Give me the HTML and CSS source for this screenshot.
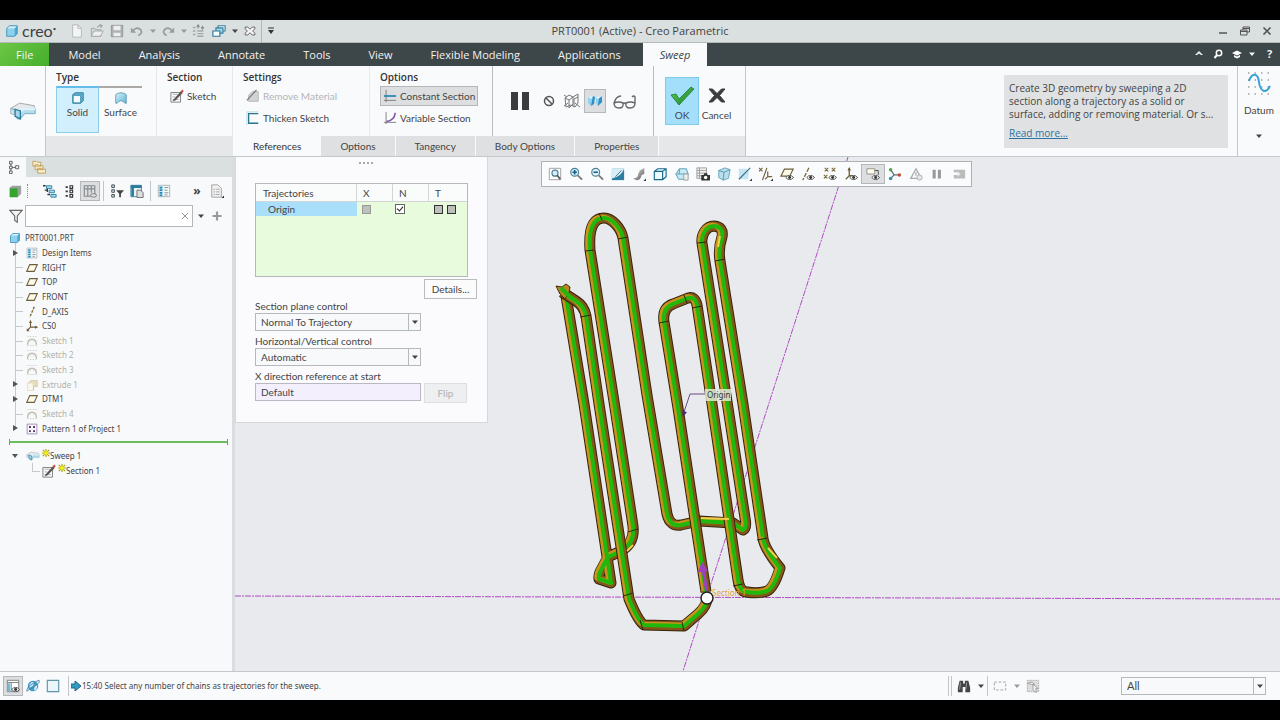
FILE: index.html
```html
<!DOCTYPE html>
<html lang="en">
<head>
<meta charset="utf-8">
<title>PRT0001 (Active) - Creo Parametric</title>
<link rel="stylesheet" href="styles.css">
</head>
<body>
<svg class="defs" aria-hidden="true">
  <defs>
    <linearGradient id="gBlue" x1="0" y1="0" x2="1" y2="1"><stop offset="0" stop-color="#d9f1fa"/><stop offset="1" stop-color="#5fb4d8"/></linearGradient>
    <linearGradient id="gGrey" x1="0" y1="0" x2="1" y2="1"><stop offset="0" stop-color="#eee"/><stop offset="1" stop-color="#555"/></linearGradient>
    <linearGradient id="gTick" x1="0" y1="0" x2="1" y2="1"><stop offset="0" stop-color="#5fd04e"/><stop offset="1" stop-color="#157a35"/></linearGradient>
    <symbol id="caret" viewBox="0 0 8 8"><path d="M1 2.500h6L4 6z" fill="currentColor"/></symbol>
    <symbol id="cube" viewBox="0 0 16 16"><path d="M2 5l3-3h9v9l-3 3H2z" fill="#4fa9d2"/><path d="M2 5h9v9H2z" fill="#8fd0ec"/><path d="M2 5l3-3h9l-3 3z" fill="#d5eff9"/><path d="M2 5l3-3h9v9l-3 3H2z" fill="none" stroke="#3c93bd"/></symbol>
    <symbol id="plane" viewBox="0 0 16 16"><path d="M5 3.500h10L11 12.500H1z" fill="#fdfbe8" stroke="#6e5f3c" stroke-width="1.500"/></symbol>
    <symbol id="axis" viewBox="0 0 16 16"><path d="M11 1L5 15" stroke="#7b6c3c" stroke-width="1.800" stroke-dasharray="3.500 1.500" fill="none"/></symbol>
    <symbol id="csys" viewBox="0 0 16 16"><path d="M6 1v8.500h9M6 9.500L1.500 14" fill="none" stroke="#6e5f3c" stroke-width="1.500"/><path d="M4 4l2-4 2 4zM12 7.500l4 2-4 2zM1 11v4h4z" fill="#6e5f3c"/></symbol>
    <symbol id="arc" viewBox="0 0 16 16"><path d="M2 13C3 3 13 3 14 13" fill="none" stroke="#b9b9aa" stroke-width="1.800"/><path d="M2 2h12M2 14h12M2 8h12" stroke="#cbc8bd" stroke-width="1.500" stroke-dasharray="1.500 2"/></symbol>
    <symbol id="listing" viewBox="0 0 16 16"><path d="M1.500 1.500h13v13h-13z" fill="#f4f9fb" stroke="#a5adb0"/><path d="M2 2h5v12H2z" fill="#c7e7f4"/><path d="M3 4h3M3 7h3M3 10h3M3 13h3" stroke="#2489b5" stroke-width="2"/><path d="M8.500 4H13M8.500 7H12M8.500 10H13M8.500 12.500H12" stroke="#7f898d"/></symbol>
    <symbol id="pencil" viewBox="0 0 16 16"><path d="M1 4h11v11H1z" fill="#fafafa" stroke="#777"/><path d="M3 6h6M3 9h3M3 12h7" stroke="#aaa"/><path d="M4 12L12.500 2.500l2 2L6 13l-3 1z" fill="#5b5350"/><path d="M12 3l2-2.500 1.800 1.800-2 2.200z" fill="#cf4c37"/></symbol>
    <symbol id="sweep" viewBox="0 0 32 22"><path d="M2 8L12 2l17 3v4l-9 2-4 1-3 5-11-3z" fill="#e7e9ea" stroke="#9aa2a5"/><path d="M2 8l10 3 4-3h14v6H18l-5 6-4 0" fill="#b3dcec" stroke="#6fa9c2"/><path d="M10 11l6-4h14v3H17l-6 5z" fill="#ddf2fa"/><path d="M7 9l6 2v9l-6-3z" fill="#a5d6ea" stroke="#2d7899" stroke-width="1.500"/></symbol>
    <symbol id="spark" viewBox="0 0 10 10"><path d="M5 0v10M0 5h10M1 1l8 8M9 1L1 9" stroke="#a9a41a" stroke-width="1.500"/><circle cx="5" cy="5" r="2.600" fill="#f4ee18"/></symbol>
    <symbol id="eye" viewBox="0 0 10 6"><path d="M.5 3Q5-2 9.500 3 5 8 .5 3z" fill="#fff" stroke="#444"/><circle cx="5" cy="3" r="1.700" fill="#333"/></symbol>
  </defs>
</svg>

<div class="app">
  <header class="titlebar">
    <div class="quick">
      <svg class="i14" viewBox="0 0 16 16"><use href="#cube"/></svg>
      <span class="brand">creo<sup>•</sup></span>
      <button aria-label="New"><svg class="i14" viewBox="0 0 16 16"><path d="M3 1h6l4 4v10H3z" fill="#f3f4f4" stroke="#b0b5b6"/><path d="M9 1v4h4" fill="none" stroke="#b0b5b6"/></svg></button>
      <button aria-label="Open"><svg class="i14" viewBox="0 0 16 16"><path d="M1.500 14V5h4l1 1.500h6V14z" fill="#d4d7d7" stroke="#a0a5a6"/><path d="M1.500 14l3-6H15l-3 6z" fill="#eee" stroke="#a0a5a6"/><path d="M8 4q2-3 5-2M11 .5l3 1.500-2 2.500" fill="none" stroke="#888"/></svg></button>
      <button aria-label="Save"><svg class="i14" viewBox="0 0 16 16"><path d="M1.500 1.500h13v13h-13z" fill="#aeb2b3" stroke="#8d9293"/><path d="M4 2h8v5H4zM4 10h8v4H4z" fill="#eee"/></svg></button>
      <button aria-label="Undo"><svg class="i14" viewBox="0 0 16 16"><path d="M3 8Q8 2 12.500 7q2 4-3 6" fill="none" stroke="#979c9d" stroke-width="2"/><path d="M1 4v6h6z" fill="#979c9d"/></svg></button>
      <button class="mini faded" aria-label="Undo list"><svg class="i8"><use href="#caret"/></svg></button>
      <button aria-label="Redo"><svg class="i14" viewBox="0 0 16 16"><path d="M13 8Q8 2 3.500 7q-2 4 3 6" fill="none" stroke="#979c9d" stroke-width="2"/><path d="M15 4v6H9z" fill="#979c9d"/></svg></button>
      <button class="mini faded" aria-label="Redo list"><svg class="i8"><use href="#caret"/></svg></button>
      <button aria-label="Regenerate"><svg class="i14" viewBox="0 0 16 16"><path d="M1 4h3M1 8h3M1 12h3M6 8h7M6 11h7M6 14h7" stroke="#a4a8a9" stroke-width="1.500"/><path d="M7 5V2M5.500 3.500L7 1l1.500 2.500M12 2v3M10.500 3.500L12 6l1.500-2.500" fill="none" stroke="#8a8f90" stroke-width="1.300"/></svg></button>
      <button aria-label="Windows"><svg class="i14" viewBox="0 0 16 16"><path d="M7 2h8v6H7z" fill="#f0f8fb" stroke="#37809f" stroke-width="1.300"/><path d="M4.500 4.500h8v6h-8z" fill="#9fd6ea" stroke="#37809f" stroke-width="1.300"/><path d="M1 8h8v6H1z" fill="#f6fbfd" stroke="#2c7898" stroke-width="1.300"/></svg></button>
      <button class="mini" aria-label="Window list"><svg class="i8"><use href="#caret"/></svg></button>
      <button aria-label="Close window"><svg class="i14" viewBox="0 0 16 16"><path d="M2.500 3.500h3L8 6l2.500-2.500h3v2L11 8l2.500 2.500v2h-3L8 10l-2.500 2.500h-3v-2L5 8 2.500 5.500z" fill="#f4f4f4" stroke="#555"/></svg></button>
      <button class="mini custom" aria-label="Customize"><svg class="i8" viewBox="0 0 8 8"><path d="M1 1h6" stroke="#333"/><path d="M1 3h6L4 7z" fill="#333"/></svg></button>
    </div>
    <h1>PRT0001 (Active) - Creo Parametric</h1>
    <div class="wincontrols">
      <button aria-label="Minimize"><svg class="i10" viewBox="0 0 10 10"><path d="M1 7h8" stroke="#555" stroke-width="1.500"/></svg></button>
      <button aria-label="Restore"><svg class="i10" viewBox="0 0 10 10"><path d="M3 4V1h6.500v5H7M3 2.500h6M.5 4H7v5H.5zM.5 5.500H7" fill="none" stroke="#555"/></svg></button>
      <button aria-label="Close"><svg class="i10" viewBox="0 0 10 10"><path d="M1.500 1.500l7 7M8.500 1.500l-7 7" stroke="#555" stroke-width="1.700"/></svg></button>
    </div>
  </header>

  <nav class="maintabs">
    <button class="file">File</button>
    <button>Model</button>
    <button>Analysis</button>
    <button>Annotate</button>
    <button>Tools</button>
    <button>View</button>
    <button>Flexible Modeling</button>
    <button>Applications</button>
    <button class="current">Sweep</button>
    <div class="navtools">
      <button aria-label="Collapse"><svg class="i10" viewBox="0 0 10 10"><path d="M1 6l4-4 4 4H7L5 4.500 3 6z" fill="#eee"/></svg></button>
      <button aria-label="Search"><svg class="i10" viewBox="0 0 10 10"><circle cx="6" cy="4" r="2.700" fill="none" stroke="#fff" stroke-width="1.500"/><path d="M4 6L1.500 9" stroke="#fff" stroke-width="2"/></svg></button>
      <button aria-label="Learning"><svg class="i10" viewBox="0 0 10 10"><path d="M0 4l5-2.500L10 4 5 6.500zM2 6l3 1.500L8 6v2L5 9.500 2 8z" fill="#fff"/></svg></button>
      <button class="slim" aria-label="Learning list"><svg class="i8"><use href="#caret"/></svg></button>
      <button class="help" aria-label="Help">?</button>
    </div>
  </nav>

  <section class="ribbon">
    <div class="feature"><svg width="28" height="20"><use href="#sweep"/></svg></div>
    <div class="ribbonmain">
      <div class="groups">
        <div class="group type">
          <h2>Type</h2>
          <div class="bigbuttons">
            <button class="big on"><svg class="i14" viewBox="0 0 16 16"><path d="M2 4l3-2h9v9l-3 3H2z" fill="#5aaed0" stroke="#2e7898"/><path d="M2.500 5H11v8.500H2.500z" fill="#f4fbfe" stroke="#3e8fae"/></svg>Solid</button>
            <button class="big"><svg class="i14" viewBox="0 0 16 16"><path d="M2 4q6-4 12 0v10h-1.500Q8 8 3.500 14H2z" fill="url(#gBlue)" stroke="#5f99ae"/></svg>Surface</button>
          </div>
        </div>
        <div class="group section">
          <h2>Section</h2>
          <button class="tool"><svg class="i14"><use href="#pencil"/></svg>Sketch</button>
        </div>
        <div class="group settings">
          <h2>Settings</h2>
          <button class="tool" disabled><svg class="i14" viewBox="0 0 16 16"><path d="M3 7l4-4h7v11H3z" fill="#d2d3d4" stroke="#b3b3b3"/><path d="M1 13L12 1" stroke="#777" stroke-width="1.300"/></svg>Remove Material</button>
          <button class="tool"><svg class="i14" viewBox="0 0 16 16"><path d="M14 3H3v11h11" fill="none" stroke="#267691" stroke-width="1.500"/><path d="M14 1H1v15" fill="none" stroke="#b8d5df"/></svg>Thicken Sketch</button>
        </div>
        <div class="group options">
          <h2>Options</h2>
          <button class="tool pressed"><svg class="i14" viewBox="0 0 16 16"><path d="M3.500 1v14M1 13h14" stroke="#777"/><path d="M1 8h14" stroke="#2a87ae" stroke-width="2"/></svg>Constant Section</button>
          <button class="tool"><svg class="i14" viewBox="0 0 16 16"><path d="M3.500 1v14M1 13h14" stroke="#777"/><path d="M4 12Q13 11 14 2" fill="none" stroke="#7e50ad" stroke-width="1.800"/></svg>Variable Section</button>
        </div>
        <div class="group preview">
          <button class="pause" aria-label="Pause"><svg width="20" height="20" viewBox="0 0 20 20"><path d="M1 1h7v18H1zM12 1h7v18h-7z" fill="#3a3c3d"/></svg></button>
          <button aria-label="No preview"><svg class="i12" viewBox="0 0 12 12"><circle cx="6" cy="6" r="4.500" fill="none" stroke="#555" stroke-width="1.500"/><path d="M3 3l6 6" stroke="#555" stroke-width="1.500"/></svg></button>
          <button aria-label="Unattached"><svg class="i16" viewBox="0 0 16 16"><path d="M1 5l4-3 4 2 5-3v9l-3 4-4-2-5 2zM1 5l4 2v8M5 7l4-3v7l-4 4M14 4l-4 2v8M0 2l3 2M0 13l4-3M16 14l-5-4" fill="none" stroke="#777"/></svg></button>
          <button class="pressed" aria-label="Attached preview"><svg class="i16" viewBox="0 0 16 16"><path d="M1 4l5-1v7l-2 3-3-3zM9 4l6-1v6l-4 4-2-3z" fill="#8fd2f0"/><path d="M6 3l2 1-1 7-3 2zM15 3l-3 2-1 8 4-4z" fill="#2f8fc2"/><path d="M1 4l5-1-2 3zM9 4l6-1-4 3z" fill="#e6f8ff"/></svg></button>
          <button class="verify" aria-label="Verify"><svg width="24" height="16" viewBox="0 0 24 16"><path d="M1 10Q6 8 10 10q1 5-4 5T1 10zM13 10q4-2 9 0 0 5-5 5t-4-5zM10 11q1-2 3 0M1 10q2-7 7-7M22 10V4q-1-2-3 0" fill="none" stroke="#666" stroke-width="1.400"/></svg></button>
        </div>
        <div class="group confirm">
          <button class="ok"><svg width="26" height="20" viewBox="0 0 26 20"><path d="M2 9l5-1 3 5L22 1l3 2L10 19z" fill="url(#gTick)" stroke="#2d8a42"/></svg>OK</button>
          <button><svg width="20" height="20" viewBox="0 0 20 20"><path d="M2 3h3.500l4.500 4.500L14.500 3H18l-5.500 6.500L18 16h-3.500L10 11.500 5.500 16H2l5.500-6.500z" fill="#3a3c3d" stroke="#3a3c3d"/></svg>Cancel</button>
        </div>
      </div>
      <nav class="subtabs">
        <span class="lead"></span>
        <button class="current">References</button>
        <button>Options</button>
        <button>Tangency</button>
        <button>Body Options</button>
        <button>Properties</button>
        <span class="tail"></span>
      </nav>
    </div>
    <aside class="hint">
      <p>Create 3D geometry by sweeping a 2D section along a trajectory as a solid or surface, adding or removing material. Or s...</p>
      <a href="#more">Read more...</a>
    </aside>
    <button class="datum">
      <svg width="24" height="26" viewBox="0 0 24 26"><path d="M1 2h22M1 9h22M1 16h22M1 23h22" stroke="#777" stroke-dasharray="1.500 5"/><path d="M2 10C5 1 11 2 12 11s7 13 11 4" fill="none" stroke="#39a5d4" stroke-width="2"/></svg>
      <span>Datum</span>
      <svg class="i8"><use href="#caret"/></svg>
    </button>
  </section>

  <main class="work">
    <aside class="tree">
      <div class="treetabs">
        <button class="current" aria-label="Model tree"><svg class="i14" viewBox="0 0 16 16"><path d="M4 1.500h3v3H4zM4 7h3v3H4zM4 12.500h3v3H4zM11 6.500h3.500v3.500H11zM7 8.500h4M5.500 4.500V7M5.500 10v2.500" fill="none" stroke="#555"/></svg></button>
        <button aria-label="Folders"><svg class="i14" viewBox="0 0 16 16"><path d="M1 1.500h4l1 1h4v4.500H1zM3.500 5.500h4l1 1h4v4.500h-9zM6.500 9.500h4l1 1h4v4.500h-9z" fill="#f9edc9" stroke="#bd9b57"/></svg></button>
      </div>
      <div class="treetools">
        <button aria-label="Body"><svg class="i14" viewBox="0 0 16 16"><path d="M2 4l3-2h10v9l-4 4H2z" fill="#9ca19d"/><path d="M2 5h9v10H2z" fill="#32a52d"/></svg></button>
        <span class="dots"></span>
        <button aria-label="Expand"><svg class="i14" viewBox="0 0 16 16"><path d="M4 2h6v3H4zM7 7h6v3H7zM9 12h6v3H9z" fill="#a9dcf0" stroke="#247d9f"/><path d="M0 2h3M2 7h3M5 12h3M5 5v4" stroke="#333" stroke-width="1.500"/></svg></button>
        <button aria-label="Collapse"><svg class="i14" viewBox="0 0 16 16"><path d="M8 2h3v3H8zM8 7h3v3H8zM8 12h3v3H8z" fill="#fff" stroke="#333" stroke-width="1.300"/><path d="M3 3.500h2.500M3 8.500h2.500M3 13.500h2.500" stroke="#333" stroke-width="2"/></svg></button>
        <button class="pressed" aria-label="Columns"><svg class="i14" viewBox="0 0 16 16"><path d="M1.500 2h12v12h-12zM1.500 5.500h12M5.500 2v12M9.500 2v8" fill="none" stroke="#878b8d" stroke-width="1.300"/><ellipse cx="12" cy="13" rx="3.500" ry="2" fill="#ddd" stroke="#777"/></svg></button>
        <i class="sep"></i>
        <button aria-label="Filter tree"><svg class="i14" viewBox="0 0 16 16"><path d="M2 1h3v3H2zM2 6.500h3v3H2zM2 12h3v3H2z" fill="#bde4f2" stroke="#444"/><path d="M7 7h9l-3.500 4v4h-2v-4z" fill="#444"/></svg></button>
        <button aria-label="Tree columns"><svg class="i14" viewBox="0 0 16 16"><path d="M1 1.500h12v13H1z" fill="#e9f5fa" stroke="#28799a"/><path d="M1 3h12M3 4v10" stroke="#28799a" stroke-width="3"/><path d="M8 7h4l3 3v5.500H8z" fill="#ddd" stroke="#666"/></svg></button>
        <i class="sep"></i>
        <button aria-label="Details"><svg class="i14"><use href="#listing"/></svg></button>
        <button class="more" aria-label="More">»</button>
        <button aria-label="Settings"><svg class="i14" viewBox="0 0 16 16"><path d="M2 1h7l4 4v10H2z" fill="#f3f3f3" stroke="#999"/><path d="M4 6h2M4 9h2M4 12h2M7 6h4M7 9h4M7 12h4" stroke="#999"/><path d="M13 16h3v-3z" fill="#333"/></svg></button>
      </div>
      <form class="search">
        <svg class="i14" viewBox="0 0 16 16"><path d="M1 1.500h14L9.500 8v7l-3-2V8z" fill="#f4f5f5" stroke="#666" stroke-width="1.300"/></svg>
        <label class="field"><input type="text" aria-label="Filter"><svg class="i8" viewBox="0 0 8 8"><path d="M1 1l6 6M7 1L1 7" stroke="#999"/></svg></label>
        <button type="button" class="mini" aria-label="Filter list"><svg class="i8"><use href="#caret"/></svg></button>
        <button type="button" aria-label="Add"><svg class="i10" viewBox="0 0 10 10"><path d="M5 .5v9M.5 5h9" stroke="#969a9b" stroke-width="2.200"/></svg></button>
      </form>
      <ul class="nodes all">
        <li class="root"><svg class="i12"><use href="#cube"/></svg>PRT0001.PRT</li>
        <li class="fold"><svg class="i12"><use href="#listing"/></svg>Design Items</li>
        <li class="leaf"><svg class="i12"><use href="#plane"/></svg>RIGHT</li>
        <li class="leaf"><svg class="i12"><use href="#plane"/></svg>TOP</li>
        <li class="leaf"><svg class="i12"><use href="#plane"/></svg>FRONT</li>
        <li class="leaf"><svg class="i12"><use href="#axis"/></svg>D_AXIS</li>
        <li class="leaf"><svg class="i12"><use href="#csys"/></svg>CS0</li>
        <li class="leaf dim"><svg class="i12"><use href="#arc"/></svg>Sketch 1</li>
        <li class="leaf dim"><svg class="i12"><use href="#arc"/></svg>Sketch 2</li>
        <li class="leaf dim"><svg class="i12"><use href="#arc"/></svg>Sketch 3</li>
        <li class="dim fold"><svg class="i12" viewBox="0 0 16 16"><path d="M2 6l5-4h8v8h-5v5H2z" fill="#e6dcbb" stroke="#cfc5a4"/><path d="M2 6h7v9H2z" fill="#faf7ed"/></svg>Extrude 1</li>
        <li class="fold"><svg class="i12"><use href="#plane"/></svg>DTM1</li>
        <li class="leaf dim"><svg class="i12"><use href="#arc"/></svg>Sketch 4</li>
        <li class="fold"><svg class="i12" viewBox="0 0 16 16"><path d="M1.500 1.500h13v13h-13z" fill="#f7f4fb" stroke="#8c7c9c"/><path d="M4 4h2.500v2.500H4zM9.500 4H12v2.500H9.500zM4 9.500h2.500V12H4zM9.500 9.500H12V12H9.500z" fill="#54346f"/></svg>Pattern 1 of Project 1</li>
      </ul>
      <div class="insert"></div>
      <ul class="nodes active">
        <li class="fold open"><svg class="i14"><use href="#sweep"/></svg><svg class="i8"><use href="#spark"/></svg>Sweep 1</li>
        <li class="child"><svg class="i14"><use href="#pencil"/></svg><svg class="i8"><use href="#spark"/></svg>Section 1</li>
      </ul>
    </aside>

    <section class="viewport">
      <svg class="scene" viewBox="235 157 1045 514" role="img" aria-label="Swept tube model">
        <defs>
          <path id="back" d="M566 296L584 404L611 583L599 579Q598 578 600 572L608 557L621 551Q635 543 633 526L626 480L615 408L590 250C588 222 597 218 604 218C612 218 621 228 623 238L647 395L667 514Q670 527 681 525L699 521L733 523L743 530Q747 528 745 518L728 408L702 243C701 235 706 226 714 226Q724 227 722 237Q718 249 720 261L743 404L763 538"/>
          <path id="front" d="M763 538Q764 548 780 568Q774 588 767 591Q758 594 747 592Q740 592 738 580L712 404L697 305Q695 296 688 298L673 304Q662 308 664 322L678 408L706 592"/>
          <path id="loop" d="M707 598Q707 606 698 614L684 626L644 625Q638 621 629 599L599 404L586 316Q584 306 576 301L562 292"/>
        </defs>
        <path class="guide" d="M848 157L683 671M235 596L1280 599"/>
        <g class="tube"><use href="#back" class="edge"/><use href="#back" class="shade"/><use href="#back" class="gold"/><use href="#back" class="core"/></g>
        <g class="tube"><use href="#front" class="edge"/><use href="#front" class="shade"/><use href="#front" class="gold"/><use href="#front" class="core"/></g>
        <g class="tube"><use href="#loop" class="edge"/><use href="#loop" class="shade"/><use href="#loop" class="gold"/><use href="#loop" class="core"/></g>
        <path d="M556 286l6 1 4-3 4 3-1 6-4 6-5-5z" fill="#b8881c" stroke="#3d2a0c"/>
        <path d="M561 288l9 9" class="core"/>
        <path class="seam" d="M585 251l10-1M618 239l10-2M599 213l3 7M697 243l10-1M715 261l10-2M580 317l11-2M659 323l10-2M684 295l3 8M692 308l10-2M757 540l11-2M623 596l10-3M640 620l3 10M682 622l2 9M628 532l10-3M733 586l10-2"/>
        <path class="flare" d="M701 518l28 1M768 548l9 10M627 551l6-6M720 236l-2 11"/>
        <path d="M683 415l7-21h15" fill="none" stroke="#6b4a82"/>
        <path d="M682 411l5 1-4 5z" fill="#4b286a"/>
        <rect x="705" y="389" width="26" height="12" fill="#e3e6d8" fill-opacity=".85"/>
        <text x="707" y="398" class="originlabel">Origin</text>
        <path d="M702 562l6 9h-3l3 20h-3l-3-19h-4z" fill="#a03fc4"/>
        <text x="712" y="596" class="sectionlabel">Section 1</text>
        <circle cx="707" cy="598" r="6" fill="#fff" stroke="#222" stroke-width="1.500"/>
      </svg>

      <div class="viewtools">
        <button aria-label="Refit"><svg class="i14" viewBox="0 0 16 16"><path d="M1.500 1.500h13v13h-13z" fill="#fff" stroke="#999"/><circle cx="8" cy="7" r="3.500" fill="#d5eef8" stroke="#4a7f94" stroke-width="1.300"/><path d="M10.500 9.500L14 14" stroke="#555" stroke-width="2"/></svg></button>
        <button aria-label="Zoom in"><svg class="i14" viewBox="0 0 16 16"><circle cx="6.500" cy="6" r="4.500" fill="#d5eef8" stroke="#4a8097" stroke-width="1.300"/><path d="M10 9.500l5 5" stroke="#777" stroke-width="2"/><path d="M4 6h5M6.500 3.500v5" stroke="#125f86" stroke-width="1.800"/></svg></button>
        <button aria-label="Zoom out"><svg class="i14" viewBox="0 0 16 16"><circle cx="6.500" cy="6" r="4.500" fill="#e3f3f9" stroke="#4a8097" stroke-width="1.300"/><path d="M10 9.500l5 5" stroke="#777" stroke-width="2"/><path d="M4 6h5" stroke="#125f86" stroke-width="1.800"/></svg></button>
        <button aria-label="Repaint"><svg class="i14" viewBox="0 0 16 16"><path d="M1 2h14v13H1z" fill="#2a7fa3"/><path d="M1 2h14Q12 11 1 13z" fill="#d8eef6"/><path d="M5 11L12 4" stroke="#4b6d7a"/></svg></button>
        <button aria-label="Rendering"><svg class="i14" viewBox="0 0 16 16"><path d="M1 13q6 0 6-5l2-4 5-3v7l-3 1q-1 6-6 6z" fill="url(#gGrey)"/><path d="M13 16h3v-3z" fill="#333"/></svg></button>
        <button aria-label="Display style"><svg class="i14" viewBox="0 0 16 16"><path d="M1.500 5l4-3H15v9l-4 3.500H1.500zM1.500 5H11v9.500M11 5l4-3" fill="#edf9fd" stroke="#176a8b" stroke-width="1.300"/></svg></button>
        <button aria-label="Perspective"><svg class="i14" viewBox="0 0 16 16"><path d="M1 8l4-6h8l2 6-2 6H4z" fill="#cae9f4" stroke="#4e9ab6"/><path d="M1 8h14M5 2v6" stroke="#4e9ab6"/><path d="M10 8h5v7h-5z" fill="#eee" stroke="#999"/></svg></button>
        <button aria-label="Saved views"><svg class="i14" viewBox="0 0 16 16"><path d="M1 1h11v12H1zM1 4h11M1 7h11M1 10h11M4 1v12" fill="#f2f2f2" stroke="#999"/><path d="M6 9h10v6.500H6zM9 7h4v2H9z" fill="#333"/><circle cx="11" cy="12" r="2" fill="#fff"/></svg></button>
        <button aria-label="View manager"><svg class="i14" viewBox="0 0 16 16"><path d="M2 4l7-3 6 2-2 10-6 2-5-3z" fill="#b9dfed" stroke="#5fa0b8"/><path d="M2 4l6 2 7-3M8 6l-1 9" fill="none" stroke="#4f91aa"/></svg></button>
        <button aria-label="Sections"><svg class="i14" viewBox="0 0 16 16"><path d="M1 2h9q4 4 1 12H1z" fill="#c5e5f1"/><path d="M1 14L14 1" stroke="#35728a" stroke-width="1.300"/><path d="M13 16h3v-3z" fill="#333"/></svg></button>
        <button aria-label="Datum display"><svg class="i14" viewBox="0 0 16 16"><path d="M0 1l4 4M4 1L0 5M9 1L4 15M10 5v6h5M10 11l-3 3" fill="none" stroke="#756641" stroke-width="1.400"/><path d="M13 16h3v-3z" fill="#333"/></svg></button>
        <button aria-label="Planes"><svg class="i14" viewBox="0 0 16 16"><path d="M5 2.500h10l-4 8H1z" fill="#fdfbe8" stroke="#6e5f3c" stroke-width="1.300"/><use href="#eye" x="6" y="9" width="10" height="6"/></svg></button>
        <button aria-label="Axes"><svg class="i14" viewBox="0 0 16 16"><path d="M9 1L2 15" stroke="#7b6c3c" stroke-width="1.500" stroke-dasharray="5 1.500"/><use href="#eye" x="6" y="9" width="10" height="6"/></svg></button>
        <button aria-label="Points"><svg class="i14" viewBox="0 0 16 16"><path d="M2 1l4 4M6 1L2 5M10 1l4 4M14 1l-4 4M1 9l4 4M5 9l-4 4" stroke="#7b6c3c" stroke-width="1.300"/><use href="#eye" x="6" y="9" width="10" height="6"/></svg></button>
        <button aria-label="Coordinate systems"><svg class="i14" viewBox="0 0 16 16"><path d="M6 1v9l-4 4M6 10h4" fill="none" stroke="#6e5f3c" stroke-width="1.500"/><path d="M4 4l2-4 2 4z" fill="#6e5f3c"/><use href="#eye" x="6" y="9" width="10" height="6"/></svg></button>
        <button class="pressed" aria-label="Annotations"><svg class="i14" viewBox="0 0 16 16"><path d="M1 2h9v6H1z" fill="#fffdea" stroke="#888"/><path d="M10 4h4v5" fill="none" stroke="#444"/><use href="#eye" x="6" y="9" width="10" height="6"/></svg></button>
        <button aria-label="Spin center"><svg class="i14" viewBox="0 0 16 16"><path d="M3 3l4 6-4 4M7 9h6" fill="none" stroke="#4e6d79" stroke-width="1.400"/><circle cx="3" cy="3" r="2" fill="#57a046"/><circle cx="3" cy="13" r="2" fill="#3c8aae"/><circle cx="13" cy="9" r="2" fill="#c2493c"/></svg></button>
        <button aria-label="Simulation"><svg class="i14" viewBox="0 0 16 16"><path d="M8 2l6 11H2zM8 6v4" fill="none" stroke="#aaa" stroke-width="1.500"/><circle cx="12" cy="12" r="3" fill="#e7e7e7" stroke="#aaa"/></svg></button>
        <button aria-label="Pause"><svg class="i14" viewBox="0 0 16 16"><path d="M3 3h3.500v10H3zM9 3h3.500v10H9z" fill="#999"/></svg></button>
        <button aria-label="Resume"><svg class="i14" viewBox="0 0 16 16"><path d="M2 3h13v10H2v-4h5V6H2z" fill="#bbb"/><path d="M6 5l4 3-4 3z" fill="#eee"/></svg></button>
      </div>

      <form class="dialog">
        <span class="grip"></span>
        <div class="trajbox">
          <table>
            <thead><tr><th class="name">Trajectories</th><th>X</th><th>N</th><th class="last">T</th></tr></thead>
            <tbody><tr><td class="name">Origin</td><td><input type="checkbox" aria-label="X" disabled></td><td class="n"><input type="checkbox" aria-label="N" class="tick" checked></td><td class="last"><input type="checkbox" aria-label="T start" class="dark"><input type="checkbox" aria-label="T end" class="dark"></td></tr></tbody>
          </table>
        </div>
        <button type="button" class="push details">Details...</button>
        <label for="plane-ctl">Section plane control</label>
        <span class="combo"><select id="plane-ctl"><option>Normal To Trajectory</option></select><svg class="i8"><use href="#caret"/></svg></span>
        <label for="hv-ctl">Horizontal/Vertical control</label>
        <span class="combo"><select id="hv-ctl"><option>Automatic</option></select><svg class="i8"><use href="#caret"/></svg></span>
        <label for="xdir">X direction reference at start</label>
        <div class="xrow"><input id="xdir" type="text" value="Default"><button type="button" class="push" disabled>Flip</button></div>
      </form>
    </section>
  </main>

  <footer class="status">
    <button class="pressed" aria-label="Navigator"><svg class="i14" viewBox="0 0 16 16"><path d="M1.500 1.500h13v13h-13zM1.500 4h13M6 4v10" fill="#fff" stroke="#777"/><path d="M2 5h3v9H2z" fill="#73bad6"/><use href="#eye" x="6" y="9" width="10" height="6"/></svg></button>
    <button aria-label="Browser"><svg class="i14" viewBox="0 0 16 16"><circle cx="8" cy="8" r="6" fill="#3e9bca"/><path d="M4 6q3-4 5-2l-1 4-4 2zM10 8l3-1-1 5-3 1z" fill="#d2edf7"/><path d="M1 14Q0 10 8 5t7-3q1 3-5 6T1 14z" fill="none" stroke="#4c819a"/></svg></button>
    <button aria-label="Full screen"><svg class="i14" viewBox="0 0 16 16"><path d="M1.500 1.500h13v13h-13z" fill="#eaf6fa" stroke="#6094a8" stroke-width="1.300"/></svg></button>
    <i class="sep"></i>
    <p><svg class="i10" viewBox="0 0 10 10"><path d="M0 3h4V0l6 5-6 5V7H0z" fill="#2e9ac5" stroke="#1e6685"/></svg>15:40 Select any number of chains as trajectories for the sweep.</p>
    <div class="statustools">
      <i class="sep"></i><i class="sep"></i>
      <button aria-label="Find"><svg class="i14" viewBox="0 0 16 16"><path d="M3 2h4v3h2V2h4l2 8v5H9.500V9h-3v6H1v-5z" fill="#444"/><path d="M4 4L3 12M11 4l-1 8" stroke="#aaa"/></svg></button>
      <button class="mini" aria-label="Find list"><svg class="i8"><use href="#caret"/></svg></button>
      <i class="sep"></i>
      <button aria-label="Box selection"><svg class="i14" viewBox="0 0 16 16"><path d="M1.500 3.500h13v9h-13z" fill="none" stroke="#999" stroke-dasharray="3 2"/></svg></button>
      <button class="mini faded" aria-label="Selection list"><svg class="i8"><use href="#caret"/></svg></button>
      <button aria-label="Selected items"><svg class="i14" viewBox="0 0 16 16"><path d="M1.500 1.500h13v13h-13z" fill="#ddd" stroke="#aaa" stroke-dasharray="2 1"/><path d="M2 5q4-3 7 0t-7 0zM8 6l6 5-3 0 1 4-2 0-2-3z" fill="#f4f4f4" stroke="#999"/></svg></button>
    </div>
    <span class="combo filter"><select aria-label="Selection filter"><option>All</option></select><svg class="i8"><use href="#caret"/></svg></span>
  </footer>
</div>
</body>
</html>
```
FILE: styles.css
```css
* { box-sizing: border-box; }
body {
  margin: 0;
  background: #000;
  color: #444;
  font: 10px/14px Lato, "Open Sans", sans-serif;
}
button, input, select { font: inherit; color: inherit; margin: 0; }
button {
  display: inline-flex;
  align-items: center;
  justify-content: center;
  padding: 0;
  border: 0;
  background: none;
}
svg { display: block; flex: none; }
h1, h2, p, ul { margin: 0; padding: 0; }
.defs { position: absolute; width: 0; height: 0; }
.i8 { width: 8px; height: 8px; }
.i10 { width: 10px; height: 10px; }
.i12 { width: 12px; height: 12px; }
.i14 { width: 14px; height: 14px; }
.i16 { width: 16px; height: 16px; }
.pressed { background: #dcdee0; border: 1px solid #b5b8ba; }
.sep { width: 1px; height: 20px; background: #c3c6c8; }

.app {
  display: flex;
  flex-direction: column;
  min-height: 100vh;
  padding: 20px 0;
  background: #000;
}

.titlebar {
  display: grid;
  grid-template-columns: 1fr auto 1fr;
  align-items: center;
  height: 23px;
  background: #dadfdf;
  border-bottom: 1px solid #b4baba;
}
.titlebar h1 { font: 11px/16px "Open Sans", sans-serif; color: #444; }
.quick { display: flex; align-items: center; height: 22px; padding-left: 5px; }
.quick button { width: 20px; }
.quick .mini { width: 11px; color: #444; }
.quick .faded, .faded { color: #999; }
.quick .custom { width: 18px; height: 22px; margin-left: 1px; border-left: 1px solid #b4baba; }
.brand { width: 48px; padding-left: 3px; font: 16px/18px Lato, sans-serif; color: #3b4245; }
.brand sup { font-size: 6px; line-height: 6px; }
.wincontrols { display: flex; justify-content: flex-end; gap: 12px; padding-right: 8px; }

.maintabs { display: flex; height: 23px; background: #3d4648; color: #f1f3f3; }
.maintabs button { padding: 0 19px; font: 11px/22px "Open Sans", sans-serif; }
.maintabs .file { padding: 0 16px; background: linear-gradient(135deg, #6cc644, #46ae2d); }
.maintabs .current { margin-left: 3px; padding: 0 17px; background: #f9fafc; color: #444; font-style: italic; }
.navtools { display: flex; align-items: center; margin-left: auto; padding: 0 5px 2px 0; gap: 8px; }
.navtools button { padding: 0; width: 11px; }
.navtools .slim { width: 8px; margin-left: -2px; }
.navtools .help { font-weight: 700; }

.ribbon { display: flex; height: 91px; background: #f9fafc; border-bottom: 1px solid #c3cacb; }
.feature { display: flex; align-items: center; justify-content: center; width: 46px; border-right: 1px solid #c3c7c9; }
.ribbonmain { display: flex; flex-direction: column; border-right: 1px solid #c3c7c9; }
.groups { display: flex; height: 70px; }
.group { padding: 4px 9px 0 10px; border-right: 1px solid #e6e8ea; }
.group h2 { margin-bottom: 2px; font: 600 10px/14px "Open Sans", sans-serif; color: #333; }
.type { width: 111px; }
.section { width: 76px; }
.settings { width: 137px; }
.options { width: 123px; border-color: #b9bdbf; }
.bigbuttons { display: flex; }
.big {
  flex-direction: column;
  justify-content: flex-start;
  gap: 0;
  width: 43px;
  height: 47px;
  padding-top: 3px;
  border-top: 2px solid #aaa9a5;
}
.on { background: #d1effc; border: 1px solid #8dcdea; border-top: 2px solid #64bde8; }
.tool { display: flex; gap: 3px; height: 20px; padding: 0 3px; }
.tool + .tool { margin-top: 2px; }
.tool:disabled { color: #b3b5b7; }
.options .tool { border: 1px solid transparent; padding: 0 2px; margin-right: -6px; }
.options .pressed { border-color: #b5b8ba; }
.preview { display: flex; align-items: center; width: 161px; padding: 0 8px 0 16px; gap: 1px; border-color: #b9bdbf; }
.preview button { width: 22px; height: 24px; }
.preview .pause { margin-right: 6px; }
.preview .verify { margin-left: 7px; }
.confirm { display: flex; align-items: flex-start; padding: 11px 8px 0 11px; border: 0; }
.confirm button { flex-direction: column; justify-content: flex-start; gap: 2px; height: 48px; width: 35px; padding-top: 9px; }
.confirm .ok { width: 34px; background: #a3dffb; border: 1px solid #7fcbed; padding-top: 8px; }
.subtabs { display: flex; flex: 1; gap: 1px; }
.subtabs button { background: #dee0e1; padding: 0 19px; }
.subtabs .current { background: #f9fafc; color: #333; }
.subtabs .lead { width: 187px; background: #e5e7e8; }
.subtabs .tail { flex: 1; min-width: 86px; background: #e5e7e8; }
.hint { align-self: flex-start; width: 224px; height: 73px; margin: 9px 9px 0 auto; padding: 7px 11px 0 5px; background: #dfe1e2; font: 10px/13px "Open Sans", sans-serif; }
.hint a { display: block; margin-top: 6px; color: #2a73a3; }
.datum { flex-direction: column; justify-content: flex-start; gap: 6px; width: 43px; padding-top: 5px; border-left: 1px solid #c3c7c9; }
.datum .i8 { margin-top: 9px; }

.work { display: flex; flex: 1; background: #e9eaee; }
.tree { width: 235px; flex: none; background: #f8f9fb; border-right: 3px solid #dadddf; font: 8px/12px "Noto Sans", sans-serif; }
.treetabs { display: flex; height: 20px; background: #dadfe0; }
.treetabs button { width: 26px; }
.treetabs .current { background: #f8f9fb; }
.treetools { display: flex; align-items: center; height: 28px; padding: 0 5px; }
.treetools button { width: 20px; height: 20px; }
.treetools .sep { margin: 0 3px; }
.treetools .dots { width: 15px; height: 14px; padding-left: 2px; }
.treetools .dots::before { content: ""; display: block; height: 14px; border-left: 1px dotted #888; }
.treetools .more { margin-left: auto; font: 700 12px/14px "Open Sans", sans-serif; }
.search { display: flex; align-items: center; height: 22px; padding-left: 9px; }
.field { position: relative; width: 168px; margin-left: 2px; }
.field input { display: block; width: 100%; height: 22px; border: 1px solid #b3b8bb; background: #fff; }
.field svg { position: absolute; right: 4px; top: 7px; }
.search button { width: 18px; }
.search .mini { width: 15px; }
.nodes { list-style: none; }
.all { display: grid; grid-auto-rows: 1fr; height: 205px; margin-top: 4px; background: linear-gradient(#c5c9cb, #c5c9cb) 15px 12px / 1px 186px no-repeat; }
.nodes li { position: relative; display: flex; align-items: center; gap: 4px; padding-left: 26px; }
.nodes .root { padding-left: 9px; }
.nodes .leaf::before { content: ""; position: absolute; left: 16px; top: 7px; width: 7px; border-top: 1px solid #c5c9cb; }
.nodes .fold::before { content: ""; position: absolute; left: 13px; top: 4px; border: solid transparent; border-width: 3px 0 3px 5px; border-left-color: #555; }
.nodes .open::before { left: 12px; top: 6px; border-width: 4px 3px 0; border-color: #555 transparent; }
.nodes .dim { color: #b1b0a3; }
.insert { height: 6px; margin: 3px 4px 0 9px; border: solid #58b348; border-width: 0 1px; background: linear-gradient(#6cbd5e, #6cbd5e) 0 2px / 100% 2px no-repeat; }
.active { padding-top: 3px; }
.active li { height: 15px; gap: 1px; }
.active li svg + svg { align-self: flex-start; margin: 1px -1px 0 1px; }
.active .child { padding-left: 42px; }
.active .child::before { content: ""; position: absolute; left: 32px; top: 0; width: 7px; height: 8px; border: solid #c5c9cb; border-width: 0 0 1px 1px; }

.viewport { position: relative; flex: 1; overflow: hidden; background: #e9eaee; }
.scene { position: absolute; width: 100%; height: 100%; }
.scene path, .scene use { stroke-linejoin: round; }
.guide { fill: none; stroke: #b04ac4; stroke-dasharray: 6 1 2 1; }
.tube use, .core { fill: none; }
.edge { stroke: #35240c; stroke-width: 11px; }
.shade { stroke: #85561a; stroke-width: 9px; }
.gold { stroke: #c8941c; stroke-width: 5px; transform: translate(-2px, -1px); }
.core { stroke: #20b80c; stroke-width: 4px; }
.seam { fill: none; stroke: #2c260d; }
.flare { fill: none; stroke: #ecd04a; stroke-width: 2px; }
.originlabel { font: 8px "Noto Sans", sans-serif; fill: #333; }
.sectionlabel { font: 8px "Noto Sans", sans-serif; fill: #e3a33c; }
.viewtools {
  position: absolute;
  top: 4px;
  left: 0;
  right: 2px;
  display: flex;
  width: 431px;
  height: 26px;
  margin: 0 auto;
  padding: 2px;
  background: #fafbfc;
  border: 1px solid #aeb1b4;
}
.viewtools button { flex: 1; }

.dialog {
  position: absolute;
  top: 0;
  left: 0;
  display: flex;
  flex-direction: column;
  align-items: flex-start;
  width: 253px;
  padding: 5px 10px 19px 19px;
  background: #fbfbfd;
  border: 1px solid #d5d8da;
  border-top: 0;
}
.grip { align-self: center; width: 14px; margin: 0 0 19px; border-top: 2px dotted #aaa; }
.trajbox { width: 213px; height: 94px; background: #e9fbdd; border: 1px solid #b5b9bb; }
.trajbox table { width: 100%; border-collapse: separate; border-spacing: 0; table-layout: fixed; }
.trajbox th, .trajbox td { padding: 0; font-weight: 400; text-align: left; }
.trajbox th { height: 18px; padding-left: 6px; background: #fafbfb; border: solid #d2d5d6; border-width: 0 1px 1px 0; width: 36px; }
.trajbox th.name { width: 101px; padding-left: 7px; }
.trajbox th.last { width: auto; border-right: 0; }
.trajbox td { height: 14px; padding-left: 5px; line-height: 12px; }
.trajbox td.n { padding-left: 2px; }
.trajbox td.name { padding-left: 12px; background: #aadffc; }
.trajbox input {
  appearance: none;
  display: block;
  float: left;
  width: 9px;
  height: 9px;
  margin: 0 4px 0 0;
  background: #bcc2bb;
  border: 1px solid #969b96;
}
.trajbox .dark { border-color: #333; }
.trajbox .tick { position: relative; width: 10px; height: 10px; background: #fff; border-color: #666; }
.trajbox .tick::after { content: ""; position: absolute; left: 2px; top: 0; width: 3px; height: 5px; border: solid #222; border-width: 0 1px 1px 0; transform: rotate(40deg); }
.push { height: 20px; width: 43px; background: #fbfbfc; border: 1px solid #b9bcbf; }
.push:disabled { background: #eeeff0; border-color: #dcdee0; color: #aeb1b3; }
.details { align-self: flex-end; width: 53px; margin: 2px 0 0; }
.combo { position: relative; display: block; width: 166px; height: 18px; margin-bottom: 3px; }
.combo select { appearance: none; display: block; width: 100%; height: 100%; padding: 0 16px 0 5px; background: #f8f9fa; border: 1px solid #b5b9bb; border-radius: 0; }
.combo svg { position: absolute; right: 2px; top: 5px; pointer-events: none; }
.combo::after { content: ""; position: absolute; right: 12px; top: 0; bottom: 0; width: 1px; background: #b5b9bb; }
.xrow { display: flex; gap: 3px; }
.xrow input { width: 166px; height: 18px; padding: 0 5px; background: #f4effd; border: 1px solid #b9b9c4; }

.status { display: flex; align-items: center; height: 29px; padding: 0 14px 0 3px; background: #f9fafc; border-top: 1px solid #c5c8ca; }
.status button { width: 20px; height: 20px; }
.status > .sep { margin: 0 2px 0 5px; }
.status p { display: flex; align-items: center; gap: 1px; font: 8px/12px "Noto Sans", sans-serif; }
.statustools { display: flex; align-items: center; gap: 2px; margin-left: auto; }
.statustools .mini { width: 9px; }
.filter { width: 145px; margin: 0 0 0 78px; font-size: 11px; }
```
